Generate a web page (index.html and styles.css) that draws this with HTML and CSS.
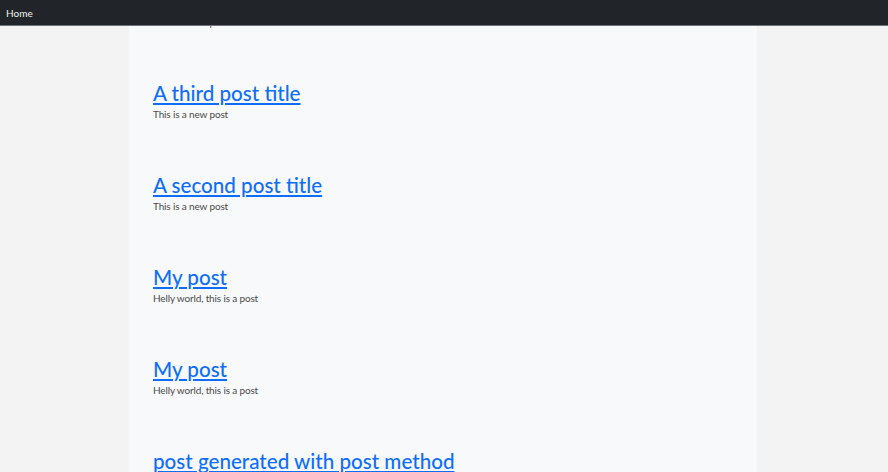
FILE: index.html
```html
<!DOCTYPE html>
<html>
<head>
<meta charset="utf-8">
<link rel="stylesheet" href="styles.css">
</head>
<body>
<nav class="navbar"><a class="nav-link" href="#">Home</a></nav>
<main class="container">
  <article class="post"><h2 class="post-title"><a href="#">A fourth post title</a></h2><p class="post-body">This is a new post</p></article>
  <article class="post"><h2 class="post-title"><a href="#">A third post title</a></h2><p class="post-body">This is a new post</p></article>
  <article class="post"><h2 class="post-title"><a href="#">A second post title</a></h2><p class="post-body">This is a new post</p></article>
  <article class="post"><h2 class="post-title"><a href="#">My post</a></h2><p class="post-body">Helly world, this is a post</p></article>
  <article class="post"><h2 class="post-title"><a href="#">My post</a></h2><p class="post-body">Helly world, this is a post</p></article>
  <article class="post"><h2 class="post-title"><a href="#">post generated with post method</a></h2><p class="post-body">This is a new post</p></article>
</main>
</body>
</html>
```
FILE: styles.css
```css
html, body { margin: 0; padding: 0; }
body {
  background: #f3f3f3;
  font-family: Lato, "Noto Sans", sans-serif;
  overflow: hidden;
  height: 472px;
}
.navbar {
  position: fixed;
  top: 0; left: 0; right: 0;
  height: 25px;
  background: #212529;
  border-bottom: 1px solid #6f7378;
  display: flex;
  align-items: center;
  padding: 0 6px;
  z-index: 10;
}
.nav-link {
  color: #f0f0f0;
  text-decoration: none;
  font-size: 10px;
}
.container {
  width: 580px;
  margin: -61px 0 0 129px;
  padding: 0 24px;
  background: #f8f9fa;
  min-height: 600px;
}
.post { padding-top: 50px; }
.post-title {
  margin: 0;
  font-size: 20.6px;
  line-height: 24px;
  font-weight: 500;
}
.post-title a {
  color: #0d6efd;
  text-decoration: underline;
  text-underline-offset: 2px;
  text-decoration-thickness: 2px;
}
.post-body {
  margin: 0;
  font-size: 10px;
  line-height: 18px;
  letter-spacing: -0.15px;
  color: #4a4a4a;
}
```
